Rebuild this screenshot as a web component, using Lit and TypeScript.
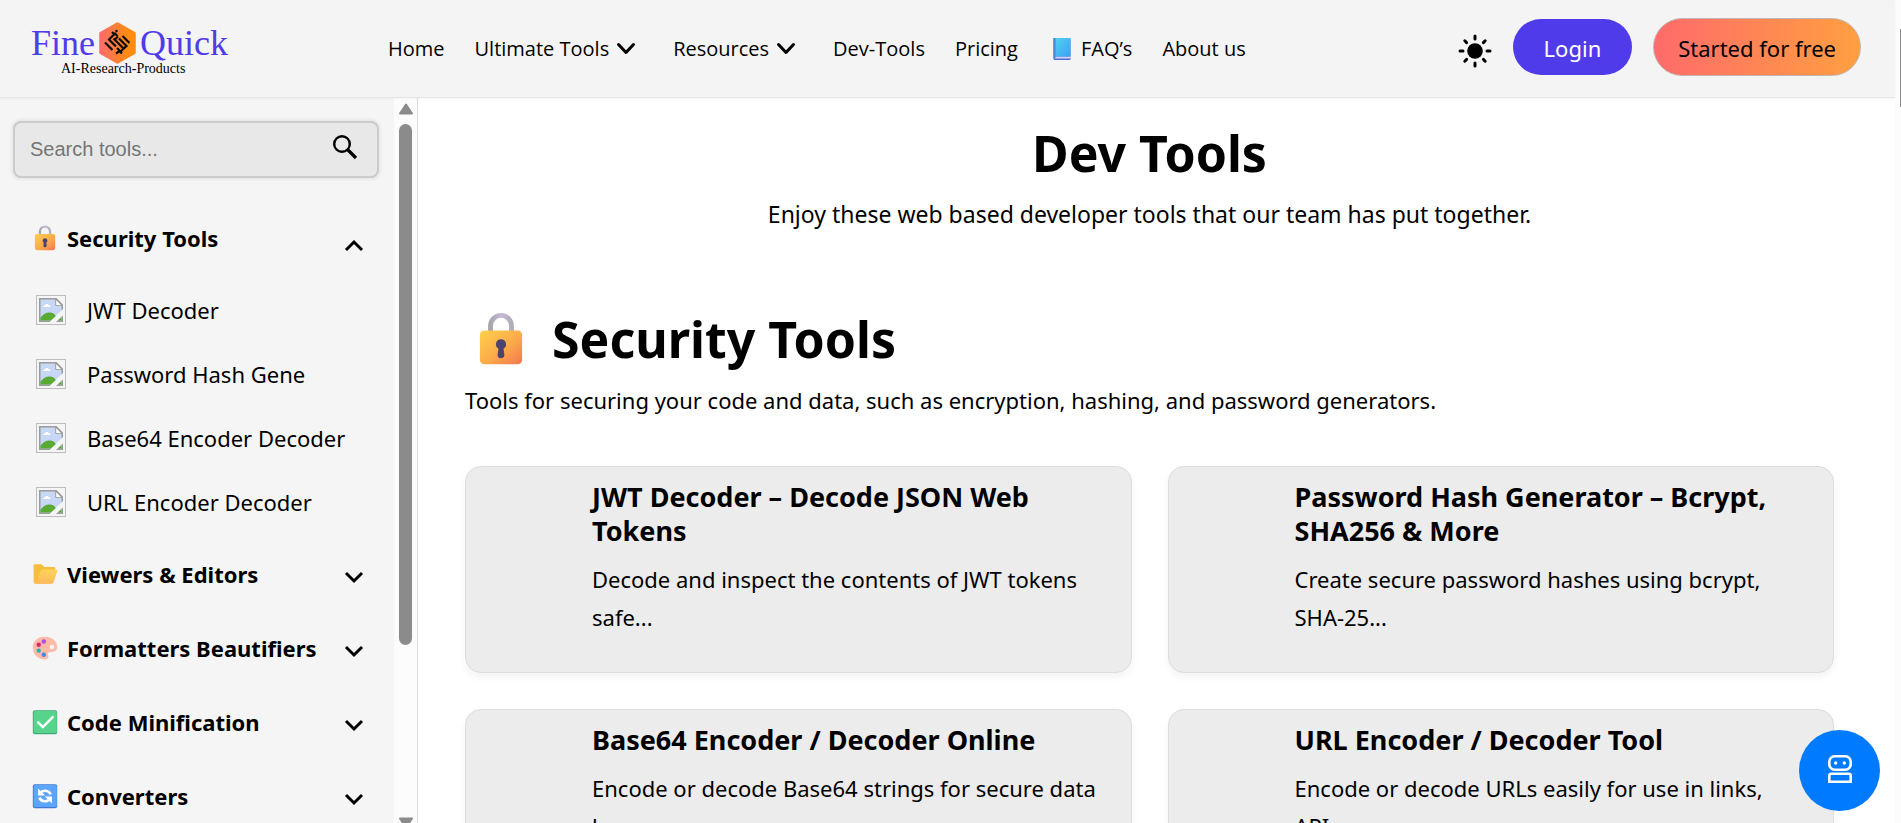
import { LitElement, html, css, svg, nothing } from "lit";
import { customElement, state } from "lit/decorators.js";

const lock = svg`<svg class="emoji" viewBox="0 0 32 32" aria-hidden="true">
  <defs>
    <linearGradient id="lb" x1="0" y1="0" x2="1" y2="1"><stop offset="0" stop-color="#ffd04a"/><stop offset=".55" stop-color="#fbab4a"/><stop offset="1" stop-color="#f5764f"/></linearGradient>
    <linearGradient id="ls" x1="0" y1="0" x2="1" y2="0"><stop offset="0" stop-color="#a9a5ae"/><stop offset=".5" stop-color="#c9b9d8"/><stop offset="1" stop-color="#b2adb9"/></linearGradient>
  </defs>
  <path d="M9.800 13V8.200a6.200 6.200 0 0 1 12.400 0V13" fill="none" stroke="url(#ls)" stroke-width="2.900"/>
  <rect x="3.500" y="11" width="25" height="20" rx="2.600" fill="url(#lb)"/>
  <path d="M16 16.200a3 3 0 0 0-1.500 5.600l-.5 3.600a1.600 1.600 0 0 0 4 0l-.5-3.600A3 3 0 0 0 16 16.200z" fill="#4b4270"/>
</svg>`;

const folder = svg`<svg class="emoji" viewBox="0 0 32 32" aria-hidden="true">
  <defs><linearGradient id="fo" x1="0" y1="0" x2="0" y2="1"><stop offset="0" stop-color="#ffd35c"/><stop offset="1" stop-color="#fdb95c"/></linearGradient></defs>
  <path d="M2 5.500A1.500 1.500 0 0 1 3.500 4h8.200l3.600 3.500H27a1.800 1.800 0 0 1 1.800 1.800V14L20 28H4.500A2.500 2.500 0 0 1 2 25.500z" fill="#f9bd3c"/>
  <path d="M10.500 12.500A3 3 0 0 1 13.300 10.500h16.200a1.600 1.600 0 0 1 1.500 2.100l-4.300 13.500a2.800 2.800 0 0 1-2.700 2H4.200A2.100 2.100 0 0 1 2.200 25.300C5.500 26 6.800 24 7.500 21.500z" fill="url(#fo)"/>
</svg>`;

const palette = svg`<svg class="emoji" viewBox="0 0 32 32" aria-hidden="true">
  <path d="M15 2C6.500 2 1 8 1 15.500 1 24 7.500 30 15 30c3.500 0 5.200-1.400 5.200-3.200 0-1.500-.9-2.300-.9-3.500 0-1.500 1.500-2.200 3.700-2.200 4.500 0 8-1.900 8-6.300C31 7 24 2 15 2z" fill="#fdbaa7"/>
  <circle cx="24.500" cy="14.800" r="2.800" fill="#f4f4f4"/>
  <circle cx="14.500" cy="8" r="2.700" fill="#b04fe0"/>
  <circle cx="8.300" cy="12" r="2.700" fill="#e2247f"/>
  <circle cx="8.300" cy="19.200" r="2.700" fill="#27b0b5"/>
  <circle cx="14.500" cy="24.300" r="2.700" fill="#3f86ef"/>
</svg>`;

const check = svg`<svg class="emoji" viewBox="0 0 32 32" aria-hidden="true">
  <rect x="1" y="1.500" width="30" height="29.500" rx="2.500" fill="#3fa878"/>
  <rect x="2" y="2.500" width="28.500" height="27" rx="2" fill="#57d38c"/>
  <path d="M7.500 16.500l5.800 5.800L25.500 10" fill="none" stroke="#fff" stroke-width="3" stroke-linecap="round" stroke-linejoin="round"/>
</svg>`;

const cycle = svg`<svg class="emoji" viewBox="0 0 32 32" aria-hidden="true">
  <rect x="1" y="1.500" width="30" height="29.500" rx="2.500" fill="#3f78d6"/>
  <rect x="2" y="2.500" width="28.500" height="27" rx="2" fill="#5ba6fa"/>
  <path d="M9.800 12.600C13 8.200 20.500 8.200 23 14M22.200 19.400C19 23.800 11.500 23.800 9 18" fill="none" stroke="#fff" stroke-width="3.200"/>
  <path d="M7.500 6.800v8.700h8.700zM24.500 25.200v-8.700h-8.700z" fill="#fff"/>
</svg>`;

const book = svg`<svg class="book" viewBox="0 0 28 28" aria-hidden="true">
  <defs><linearGradient id="bk" x1="0" y1="0" x2="1" y2="1"><stop offset="0" stop-color="#55d3f2"/><stop offset="1" stop-color="#3ba2f2"/></linearGradient></defs>
  <rect x="5.500" y="3" width="17" height="22" rx="1" fill="#4d6fd0"/>
  <rect x="7" y="21.500" width="15.500" height="2" fill="#d6d3ff"/>
  <rect x="5.500" y="3" width="17" height="18.500" rx="1" fill="url(#bk)"/>
  <rect x="5.500" y="3" width="2" height="20" fill="#3a90d8"/>
</svg>`;

const missing = svg`<svg viewBox="0 0 24 24" width="24" height="24" aria-hidden="true">
  <path d="M0 0h17.500L24 6.500V24H0z" fill="#9b9b9b"/>
  <path d="M1.500 1.500h14.700v6.300h6.300v14.700H1.500z" fill="#c6d8f6"/>
  <path d="M17.200 2.300l4.800 4.700h-4.800z" fill="#fff"/>
  <path d="M4 9c0-1.600 1.300-1.900 2-1.800C6.500 5.600 9.300 5.600 9.700 7.300c1.500 0 2 .9 2 1.700z" fill="#fff"/>
  <path d="M1.500 22.500v-3c3-3.500 6-5.500 10-5 3 .4 5 2.500 5.500 4l5.500-1v5z" fill="#57ab35"/>
  <path d="M24 11L10.500 24h6.500L24 17.500z" fill="#f5f5f5"/>
</svg>`;

const arrow = (up: boolean) => svg`<svg class="scroll-arrow" viewBox="0 0 16 12" aria-hidden="true">
  <path d=${up ? "M8 1.500L14 10.500H2z" : "M8 10.500L2 1.500h12z"} fill="#8b8b8b" stroke="#8b8b8b" stroke-width="2" stroke-linejoin="round"/></svg>`;

const navChevron = svg`<svg class="nav-chevron" viewBox="0 0 24 24" aria-hidden="true">
  <path d="M4.500 7.500L12 15.500l7.500-8" fill="none" stroke="#000" stroke-width="3" stroke-linejoin="round" stroke-linecap="round"/></svg>`;

interface Group { name: string; icon: unknown; items: string[] }

const groups: Group[] = [
  { name: "Security Tools", icon: lock, items: ["JWT Decoder", "Password Hash Gene", "Base64 Encoder Decoder", "URL Encoder Decoder"] },
  { name: "Viewers & Editors", icon: folder, items: [] },
  { name: "Formatters Beautifiers", icon: palette, items: [] },
  { name: "Code Minification", icon: check, items: [] },
  { name: "Converters", icon: cycle, items: [] },
];

const cards = [
  ["JWT Decoder – Decode JSON Web Tokens", "Decode and inspect the contents of JWT tokens safe..."],
  ["Password Hash Generator – Bcrypt, SHA256 & More", "Create secure password hashes using bcrypt, SHA-25..."],
  ["Base64 Encoder / Decoder Online", "Encode or decode Base64 strings for secure data ha..."],
  ["URL Encoder / Decoder Tool", "Encode or decode URLs easily for use in links, API..."],
];

@customElement("site-header")
class SiteHeader extends LitElement {
  static styles = css`
    :host { display: block; position: relative; z-index: 1; }
    header { display: flex; align-items: center; height: 97px; padding: 0 34px 0 31px; background: #f4f4f4; border-bottom: 1px solid #e6e6e6; box-shadow: 0 1px 2px rgba(0, 0, 0, 0.04); }
    .logo { display: flex; flex-direction: column; font-family: "Liberation Serif", serif; color: #503bea; text-decoration: none; }
    .brand { display: flex; align-items: center; gap: 4px; font-size: 36px; line-height: 44px; }
    .mark { width: 37px; height: 42px; }
    .tagline { margin-top: -3px; padding-left: 30px; font-size: 14px; line-height: 14px; color: #000; }
    nav { display: flex; align-items: center; gap: 30px; margin-left: 160px; font: 20px/30px "Open Sans", sans-serif; }
    nav a { display: flex; align-items: center; color: #000; text-decoration: none; white-space: nowrap; }
    .nav-chevron { width: 24px; height: 24px; margin: 0 5px; }
    .book { width: 28px; height: 28px; margin-right: 5px; }
    .actions { display: flex; align-items: center; gap: 21px; margin-left: auto; padding-bottom: 3px; }
    button { margin: 0; border: 0; background: none; padding: 0; cursor: pointer; color: #000; font: 22px/30px "Noto Sans", sans-serif; white-space: nowrap; }
    .theme { display: flex; padding-top: 8px; }
    .login { padding: 14px 31px 12px; border-radius: 28px; background: #503bea; color: #fff; }
    .start { padding: 14px 24px 12px; border: 1px solid #c3b6b4; border-radius: 29px; background: linear-gradient(90deg, #ff6b6b, #ff9f40); }
  `;
  render() {
    return html`<header>
      <a class="logo" href="#">
        <span class="brand">Fine
          <svg class="mark" viewBox="0 0 37 42" aria-hidden="true">
            <defs><linearGradient id="hx"><stop offset="0" stop-color="#ff6b6b"/><stop offset=".75" stop-color="#ff8a15"/><stop offset="1" stop-color="#ff8c0a"/></linearGradient></defs>
            <path d="M18.500 1L36 11v20L18.500 41 1 31V11z" fill="url(#hx)" stroke="url(#hx)" stroke-width="1.500" stroke-linejoin="round"/>
            <path d="M6 20.500l7.500 7.500M9.500 17l7.500 7.500M9.500 18l6.500-6.500 2.500 2.500M13 10l3 3M16.500 9.500l2-1M14.500 16.500l9.500 9.500M19 14.500l-4 4M23.500 14l7 7M20 16.500l7.500 7.500-6 5.500-3.500-3.500M20 28.500l3 3M17 31.500l3-2" fill="none" stroke="#0c0c0c" stroke-width="2.200"/>
          </svg>
          Quick</span>
        <span class="tagline">AI-Research-Products</span>
      </a>
      <nav>
        <a href="#">Home</a>
        <a href="#">Ultimate Tools ${navChevron}</a>
        <a href="#">Resources ${navChevron}</a>
        <a href="#">Dev-Tools</a>
        <a href="#">Pricing</a>
        <a href="#">${book}FAQ’s</a>
        <a href="#">About us</a>
      </nav>
      <div class="actions">
        <button class="theme" aria-label="Toggle theme">
          <svg width="34" height="34" viewBox="0 0 34 34" aria-hidden="true">
            <circle cx="17" cy="17" r="7.800"/>
            <path d="M17 2v3M17 29v3M2 17h3M29 17h3M6.800 6.800l1.800 1.800M25.400 25.400l1.800 1.800M6.800 27.200l1.800-1.800M25.400 8.600l1.800-1.800" stroke="#000" stroke-width="3" stroke-linecap="round"/>
          </svg>
        </button>
        <button class="login">Login</button>
        <button class="start">Started for free</button>
      </div>
    </header>`;
  }
}

@customElement("tool-sidebar")
class ToolSidebar extends LitElement {
  static styles = css`
    :host { display: flex; flex: none; width: 417px; border-right: 1px solid #ddd; overflow: hidden; color: #000; font: 22px/30px "Noto Sans", sans-serif; }
    .panel { flex: 1; min-width: 0; background: #f5f5f5; overflow: hidden; }
    .search { display: flex; align-items: center; box-sizing: border-box; height: 57px; margin: 23px 15px 23px 13px; padding: 0 18px 2px 15px; border: 2px solid #ccc; border-radius: 8px; background: #e8e8e8; box-shadow: 0 0 5px rgba(0, 0, 0, 0.12); }
    .search input { flex: 1; min-width: 0; padding: 0; border: 0; outline: 0; background: none; font: 20px/24px "Liberation Sans", sans-serif; color: #000; }
    .search input::placeholder { color: #757575; opacity: 1; }
    .find { display: flex; padding: 0 0 4px; border: 0; background: none; }
    .head { display: flex; align-items: center; gap: 9px; box-sizing: border-box; width: 100%; height: 74px; padding: 0 28px 0 32px; border: 0; background: none; color: #000; font: bold 22px/30px "Noto Sans", sans-serif; white-space: nowrap; text-align: left; cursor: pointer; }
    .emoji { flex: none; width: 26px; height: 26px; }
    .chevron { width: 24px; height: 24px; margin-left: auto; overflow: visible; }
    ul { margin: 0; padding: 3px 0; list-style: none; }
    li a { display: flex; align-items: center; gap: 21px; height: 64px; padding-left: 36px; color: #000; text-decoration: none; white-space: nowrap; }
    .thumb { display: flex; align-items: center; justify-content: center; box-sizing: border-box; width: 30px; height: 30px; border: 1px solid #bdbdbd; }
    .scrollbar { display: flex; flex-direction: column; align-items: center; width: 23px; padding-top: 5px; box-sizing: border-box; background: #fcfcfc; }
    .scroll-arrow { flex: none; width: 16px; height: 12px; }
    .track { display: flex; flex: 1; width: 13px; margin: 9px 0 1px; padding-bottom: 6px; }
    .grip { width: 13px; height: 76%; border-radius: 7px; background: #8b8b8b; }
    .lower { flex: none; height: 6px; overflow: hidden; display: flex; }
  `;
  @state() open = "Security Tools";
  render() {
    return html`
      <div class="panel">
        <div class="search">
          <input type="text" aria-label="Search tools" placeholder="Search tools..." />
          <button class="find" aria-label="Search">
            <svg width="28" height="28" viewBox="0 0 28 28" fill="none" stroke="#000" aria-hidden="true"><circle cx="11" cy="11" r="7.800" stroke-width="2.400"/><path d="M16.500 16.500l8.500 8.500" stroke-width="3.200"/></svg>
          </button>
        </div>
        ${groups.map((g) => {
          const open = g.name === this.open;
          return html`<button class="head" aria-expanded=${open} @click=${() => (this.open = open ? "" : g.name)}>
              ${g.icon}<span>${g.name}</span>
              <svg class="chevron" viewBox="0 0 24 24" fill="none" stroke="#000" stroke-width="3" aria-hidden="true"><path d=${open ? "M4 24l8-8 8 8" : "M4 11l8 8 8-8"}/></svg>
            </button>
            ${open && g.items.length
              ? html`<ul>${g.items.map((i) => html`<li><a href="#"><span class="thumb">${missing}</span>${i}</a></li>`)}</ul>`
              : nothing}`;
        })}
      </div>
      <div class="scrollbar">
        ${arrow(true)}
        <div class="track"><div class="grip"></div></div>
        <div class="lower">${arrow(false)}</div>
      </div>`;
  }
}

@customElement("app-root")
class AppRoot extends LitElement {
  static styles = css`
    :host { display: flex; height: 100vh; overflow: hidden; background: #fff; color: #000; font: 22px/38px "Noto Sans", sans-serif; }
    .page { display: flex; flex-direction: column; flex: 1; min-width: 0; }
    .body { display: flex; flex: 1; min-height: 0; }
    main { flex: 1; min-width: 0; padding: 23px 61px 0 47px; overflow: hidden; }
    h1, h2 { margin: 0 0 10px; font-size: 50px; line-height: 64px; font-weight: 700; }
    h1 { text-align: center; }
    p { margin: 0; }
    .intro { margin-bottom: 74px; font-size: 23px; text-align: center; }
    h2 { display: flex; align-items: center; gap: 24px; padding-left: 9px; }
    .emoji { width: 54px; height: 54px; }
    .about { margin-bottom: 47px; }
    .grid { display: grid; grid-template-columns: 1fr 1fr; gap: 36px; }
    .card { box-sizing: border-box; min-height: 207px; padding: 13px 24px 35px 126px; border: 1px solid #ddd; border-radius: 16px; background: #ececec; box-shadow: 0 4px 8px rgba(0, 0, 0, 0.05); }
    .card h3 { margin: 0 0 12px; font-size: 27px; line-height: 34px; font-weight: 700; }
    .chat { position: fixed; right: 21px; bottom: 12px; display: flex; align-items: center; justify-content: center; width: 81px; height: 81px; padding: 0 0 4px; border: 0; border-radius: 50%; background: #007bff; cursor: pointer; z-index: 2; }
    .rail { display: flex; flex: none; flex-direction: column; width: 6px; box-sizing: border-box; padding-top: 29px; align-items: flex-end; background: #fcfcfc; }
    .rail-grip { width: 1px; height: 78px; background: #8b8b8b; }
  `;
  render() {
    return html`
      <div class="page">
        <site-header></site-header>
        <div class="body">
          <tool-sidebar></tool-sidebar>
          <main>
            <h1>Dev Tools</h1>
            <p class="intro">Enjoy these web based developer tools that our team has put together.</p>
            <h2>${lock}<span>Security Tools</span></h2>
            <p class="about">Tools for securing your code and data, such as encryption, hashing, and password generators.</p>
            <div class="grid">
              ${cards.map(([title, text]) => html`<article class="card"><h3>${title}</h3><p>${text}</p></article>`)}
            </div>
          </main>
        </div>
      </div>
      <div class="rail"><div class="rail-grip"></div></div>
      <button class="chat" aria-label="Open assistant">
        <svg width="24" height="28" viewBox="0 0 24 28" fill="none" stroke="#fff" stroke-width="2.600" aria-hidden="true">
          <rect x="1.300" y="1.300" width="21.400" height="13.400" rx="5.500"/>
          <path d="M1.300 26.700v-6a2 2 0 0 1 2-2h17.400a2 2 0 0 1 2 2v6z"/>
          <circle cx="7.700" cy="8" r="1.700" fill="#fff" stroke="none"/><circle cx="16.300" cy="8" r="1.700" fill="#fff" stroke="none"/>
        </svg>
      </button>`;
  }
}
